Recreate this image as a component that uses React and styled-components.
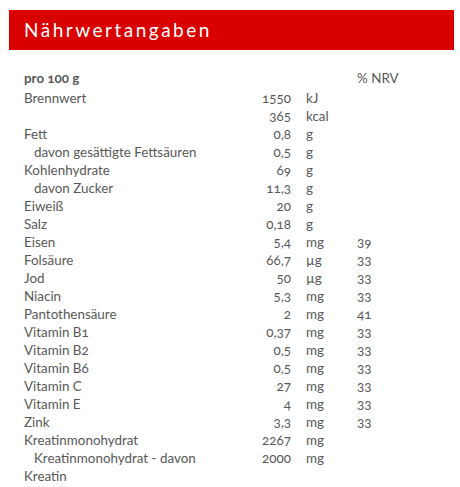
import React from "react";
import styled, { createGlobalStyle } from "styled-components";

const Global = createGlobalStyle`
  body {
    margin: 0;
    background: #fff;
    font-family: Lato, "Open Sans", sans-serif;
  }
`

const Wrap = styled.div`
  padding: 10px 6px 0 9px;
`

const Title = styled.h2`
  margin: 0;
  height: 40px;
  background: #d90000;
  color: #fff;
  font-size: 19px;
  font-weight: 400;
  letter-spacing: 2.5px;
  line-height: 40px;
  padding-left: 15px;
`

const Table = styled.table`
  margin: 19px 0 0 15px;
  border-collapse: collapse;
  color: #585858;
  font-size: 13.4px;
  line-height: 18px;
  font-variant-numeric: oldstyle-nums;
`

const Row = styled.tr`
  vertical-align: top;
`

const Label = styled.td`
  padding: 0;
  width: 210px;
  text-indent: ${p => (p.sub ? "10px" : "0")};
  font-weight: ${p => (p.head ? 700 : 400)};
  height: ${p => (p.head ? "20px" : "18px")};
`

const Value = styled.td`
  padding: 0;
  width: 57px;
  text-align: right;
`

const Unit = styled.td`
  padding: 0 0 0 15px;
  width: 36px;
`

const Nrv = styled.td`
  padding: 0 0 0 15px;
`

const rows = [
  ["Brennwert", "1550", "kJ", ""],
  ["", "365", "kcal", ""],
  ["Fett", "0,8", "g", ""],
  ["davon gesättigte Fettsäuren", "0,5", "g", "", true],
  ["Kohlenhydrate", "69", "g", ""],
  ["davon Zucker", "11,3", "g", "", true],
  ["Eiweiß", "20", "g", ""],
  ["Salz", "0,18", "g", ""],
  ["Eisen", "5,4", "mg", "39"],
  ["Folsäure", "66,7", "µg", "33"],
  ["Jod", "50", "µg", "33"],
  ["Niacin", "5,3", "mg", "33"],
  ["Pantothensäure", "2", "mg", "41"],
  ["Vitamin B1", "0,37", "mg", "33"],
  ["Vitamin B2", "0,5", "mg", "33"],
  ["Vitamin B6", "0,5", "mg", "33"],
  ["Vitamin C", "27", "mg", "33"],
  ["Vitamin E", "4", "mg", "33"],
  ["Zink", "3,3", "mg", "33"],
  ["Kreatinmonohydrat", "2267", "mg", ""],
  ["Kreatinmonohydrat - davon Kreatin", "2000", "mg", "", true],
]

export default function App() {
  return (
    <Wrap>
      <Global />
      <Title>Nährwertangaben</Title>
      <Table>
        <tbody>
          <Row>
            <Label head>pro 100 g</Label>
            <Value></Value>
            <Unit></Unit>
            <Nrv>% NRV</Nrv>
          </Row>
          {rows.map((r, i) => (
            <Row key={i}>
              <Label sub={r[4]}>{r[0]}</Label>
              <Value>{r[1]}</Value>
              <Unit>{r[2]}</Unit>
              <Nrv>{r[3]}</Nrv>
            </Row>
          ))}
        </tbody>
      </Table>
    </Wrap>
  )
}
